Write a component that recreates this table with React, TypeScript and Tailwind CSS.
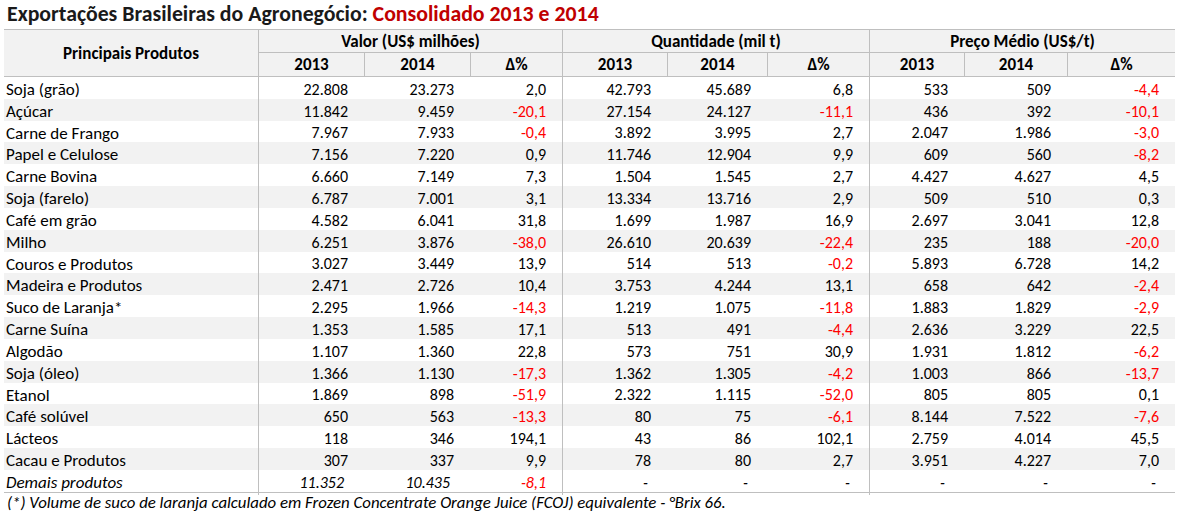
import React from "react";

const rows: string[][] = [
  ["Soja (grão)", "22.808", "23.273", "2,0", "42.793", "45.689", "6,8", "533", "509", "-4,4"],
  ["Açúcar", "11.842", "9.459", "-20,1", "27.154", "24.127", "-11,1", "436", "392", "-10,1"],
  ["Carne de Frango", "7.967", "7.933", "-0,4", "3.892", "3.995", "2,7", "2.047", "1.986", "-3,0"],
  ["Papel e Celulose", "7.156", "7.220", "0,9", "11.746", "12.904", "9,9", "609", "560", "-8,2"],
  ["Carne Bovina", "6.660", "7.149", "7,3", "1.504", "1.545", "2,7", "4.427", "4.627", "4,5"],
  ["Soja (farelo)", "6.787", "7.001", "3,1", "13.334", "13.716", "2,9", "509", "510", "0,3"],
  ["Café em grão", "4.582", "6.041", "31,8", "1.699", "1.987", "16,9", "2.697", "3.041", "12,8"],
  ["Milho", "6.251", "3.876", "-38,0", "26.610", "20.639", "-22,4", "235", "188", "-20,0"],
  ["Couros e Produtos", "3.027", "3.449", "13,9", "514", "513", "-0,2", "5.893", "6.728", "14,2"],
  ["Madeira e Produtos", "2.471", "2.726", "10,4", "3.753", "4.244", "13,1", "658", "642", "-2,4"],
  ["Suco de Laranja*", "2.295", "1.966", "-14,3", "1.219", "1.075", "-11,8", "1.883", "1.829", "-2,9"],
  ["Carne Suína", "1.353", "1.585", "17,1", "513", "491", "-4,4", "2.636", "3.229", "22,5"],
  ["Algodão", "1.107", "1.360", "22,8", "573", "751", "30,9", "1.931", "1.812", "-6,2"],
  ["Soja (óleo)", "1.366", "1.130", "-17,3", "1.362", "1.305", "-4,2", "1.003", "866", "-13,7"],
  ["Etanol", "1.869", "898", "-51,9", "2.322", "1.115", "-52,0", "805", "805", "0,1"],
  ["Café solúvel", "650", "563", "-13,3", "80", "75", "-6,1", "8.144", "7.522", "-7,6"],
  ["Lácteos", "118", "346", "194,1", "43", "86", "102,1", "2.759", "4.014", "45,5"],
  ["Cacau e Produtos", "307", "337", "9,9", "78", "80", "2,7", "3.951", "4.227", "7,0"],
];

const demais = ["Demais produtos", "11.352", "10.435", "-8,1", "-", "-", "-", "-", "-", "-"];

const COLS = "grid grid-cols-[254px_106px_106px_92px_105px_100px_102px_95px_103px_108px]";
const SEP = [1, 4, 7];

function Row({ cells, index, italic }: { cells: string[]; index: number; italic?: boolean }) {
  const bg = index % 2 === 1 ? "bg-[#f2f2f2]" : "bg-white";
  return (
    <div className={`${COLS} h-[21.84px] ${bg} ${italic ? "italic" : ""}`}>
      {cells.map((c, i) => {
        const isDelta = i === 3 || i === 6 || i === 9;
        const red = isDelta && c.startsWith("-") && c !== "-";
        const sep = SEP.includes(i) ? "border-l border-[#bfbfbf]" : "";
        if (i === 0) {
          return (
            <div key={i} className="flex items-center pl-[2px] whitespace-nowrap text-[17px]">
              {c}
            </div>
          );
        }
        let pad = "pr-[16px]";
        if (italic) {
          if (c === "-") pad = "pr-[19px]";
          else if (!isDelta) pad = "pr-[20px]";
        }
        return (
          <div
            key={i}
            className={`flex items-center justify-end whitespace-nowrap ${pad} ${sep} ${red ? "text-[#ff0000]" : ""}`}
          >
            {c}
          </div>
        );
      })}
    </div>
  );
}

export default function App() {
  const hdr = "flex items-center justify-center whitespace-nowrap";
  return (
    <div
      className="w-[1179px] h-[521px] bg-white text-black overflow-hidden text-[16px]"
      style={{ fontFamily: "Carlito, Calibri, Lato, sans-serif" }}
    >
      <div className="h-[29px] pl-[7px] text-[21.8px] font-bold leading-[27px] whitespace-nowrap text-[#1a1a1a]">
        Exportações Brasileiras do Agronegócio: <span className="text-[#c00000]">Consolidado 2013 e 2014</span>
      </div>
      <div className="ml-[4px] w-[1171px]">
        <div
          className={`${COLS} grid-rows-[23px_23px] border-t border-b border-[#bfbfbf] bg-[#f2f2f2] font-bold leading-none text-[17px]`}
        >
          <div className={`${hdr} row-span-2`}>Principais Produtos</div>
          <div className={`${hdr} col-span-3 border-l border-b border-[#bfbfbf]`}>Valor (US$ milhões)</div>
          <div className={`${hdr} col-span-3 border-l border-b border-[#bfbfbf]`}>Quantidade (mil t)</div>
          <div className={`${hdr} col-span-3 border-l border-b border-[#bfbfbf]`}>Preço Médio (US$/t)</div>
          {[0, 1, 2].map((g) =>
            ["2013", "2014", "Δ%"].map((t, k) => (
              <div key={`${g}-${k}`} className={`${hdr} border-l border-[#bfbfbf]`}>
                {t}
              </div>
            ))
          )}
        </div>
        <div className="border-b border-[#bfbfbf]">
          {rows.map((r, i) => (
            <Row key={i} cells={r} index={i} />
          ))}
          <Row cells={demais} index={rows.length} italic />
        </div>
      </div>
      <div className="pl-[7px] italic leading-[19px] whitespace-nowrap text-[16.8px]">
        (*) Volume de suco de laranja calculado em Frozen Concentrate Orange Juice (FCOJ) equivalente - °Brix 66.
      </div>
    </div>
  );
}
